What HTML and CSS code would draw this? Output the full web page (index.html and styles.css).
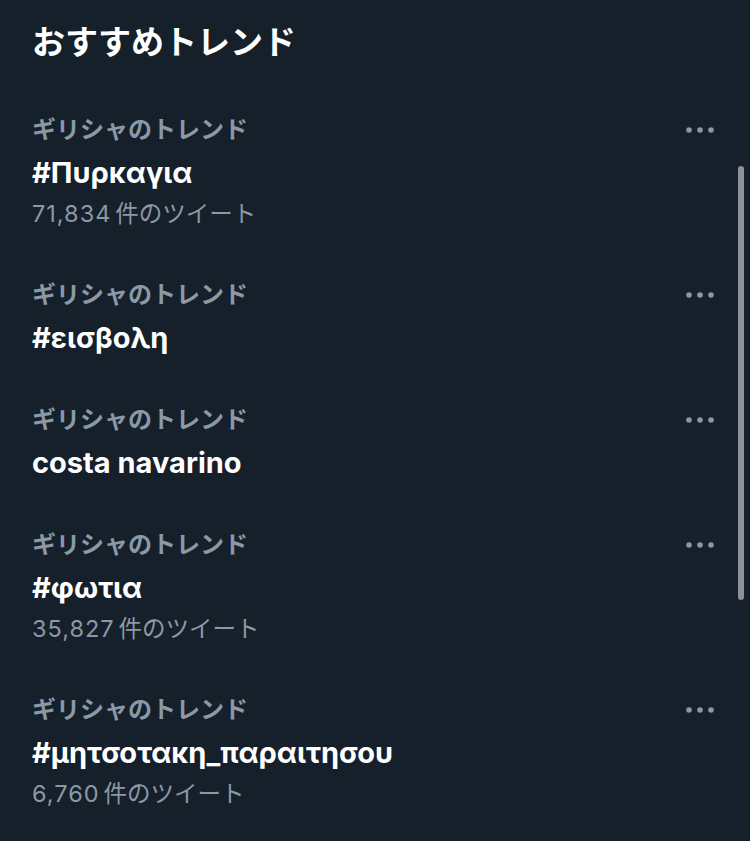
FILE: index.html
```html
<!DOCTYPE html>
<html>
	<head>
		<meta charset="utf-8">
		<title>おすすめトレンド</title>
		<link rel="stylesheet" href="styles.css">
	</head>
	<body>
		<div class="panel">
			<h2 class="title">おすすめトレンド</h2>
			<ul class="trends">
				<li class="trend">
					<div class="info">
						<span class="meta">ギリシャのトレンド</span>
						<span class="name">#Πυρκαγια</span>
						<span class="count"><span class="num">71,834</span>件のツイート</span>
					</div>
					<a class="more" href="javascript:;"><svg width="30" height="8" viewBox="0 0 30 8"><circle cx="4" cy="4" r="2.8"/><circle cx="15" cy="4" r="2.8"/><circle cx="26" cy="4" r="2.8"/></svg></a>
				</li>
				<li class="trend">
					<div class="info">
						<span class="meta">ギリシャのトレンド</span>
						<span class="name">#εισβολη</span>
					</div>
					<a class="more" href="javascript:;"><svg width="30" height="8" viewBox="0 0 30 8"><circle cx="4" cy="4" r="2.8"/><circle cx="15" cy="4" r="2.8"/><circle cx="26" cy="4" r="2.8"/></svg></a>
				</li>
				<li class="trend">
					<div class="info">
						<span class="meta">ギリシャのトレンド</span>
						<span class="name">costa navarino</span>
					</div>
					<a class="more" href="javascript:;"><svg width="30" height="8" viewBox="0 0 30 8"><circle cx="4" cy="4" r="2.8"/><circle cx="15" cy="4" r="2.8"/><circle cx="26" cy="4" r="2.8"/></svg></a>
				</li>
				<li class="trend">
					<div class="info">
						<span class="meta">ギリシャのトレンド</span>
						<span class="name">#φωτια</span>
						<span class="count"><span class="num">35,827</span>件のツイート</span>
					</div>
					<a class="more" href="javascript:;"><svg width="30" height="8" viewBox="0 0 30 8"><circle cx="4" cy="4" r="2.8"/><circle cx="15" cy="4" r="2.8"/><circle cx="26" cy="4" r="2.8"/></svg></a>
				</li>
				<li class="trend">
					<div class="info">
						<span class="meta">ギリシャのトレンド</span>
						<span class="name">#μητσοτακη_παραιτησου</span>
						<span class="count"><span class="num">6,760</span>件のツイート</span>
					</div>
					<a class="more" href="javascript:;"><svg width="30" height="8" viewBox="0 0 30 8"><circle cx="4" cy="4" r="2.8"/><circle cx="15" cy="4" r="2.8"/><circle cx="26" cy="4" r="2.8"/></svg></a>
				</li>
			</ul>
			<div class="scrollbar"></div>
		</div>
	</body>
</html>
```

FILE: styles.css
```css
*{
	margin: 0;
	padding: 0;
	list-style: none;
	text-decoration: none;
}
html,body{
	background: #15202b;
}
body{
	font-family: "Inter", "Noto Sans CJK JP", sans-serif;
	color: #ffffff;
	overflow: hidden;
}
.panel{
	position: relative;
	height: 841px;
	padding: 20px 32px 0 32px;
}
.title{
	font-size: 33px;
	line-height: 44px;
	font-weight: 700;
}
.trends{
	margin-top: 27px;
}
.trend{
	display: flex;
	justify-content: space-between;
	align-items: flex-start;
	padding: 19px 0 20px 0;
}
.info{
	display: flex;
	flex-direction: column;
}
.meta{
	font-size: 24px;
	line-height: 40px;
	font-weight: 700;
	color: #8b98a5;
}
.name{
	font-size: 29px;
	line-height: 46px;
	font-weight: 700;
}
.count{
	font-size: 23.5px;
	line-height: 36px;
	padding-bottom: 4px;
	color: #8b98a5;
}
.count .num{
	letter-spacing: 1px;
	margin-right: 4px;
}
.more{
	display: flex;
	align-items: center;
	height: 40px;
	margin-right: 3px;
}
.more svg{
	fill: #8b98a5;
}
.scrollbar{
	position: absolute;
	left: 738px;
	top: 166px;
	width: 6px;
	height: 434px;
	border-radius: 3px;
	background: #8e9298;
}
```
